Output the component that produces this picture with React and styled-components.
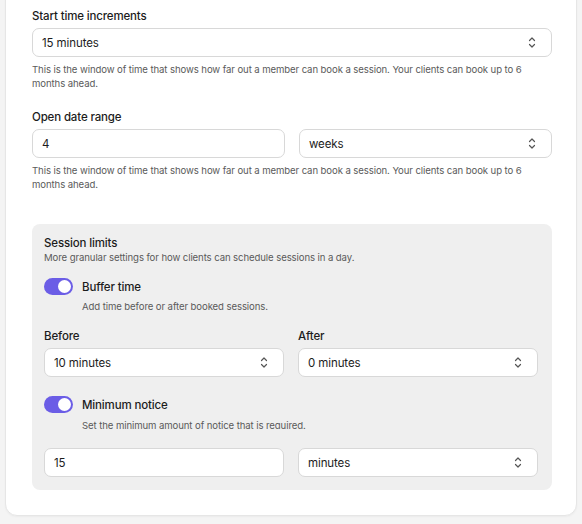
import React from "react";
import styled, { createGlobalStyle } from "styled-components";

const GlobalStyle = createGlobalStyle`
  *, *:before, *:after { box-sizing: border-box; }
  body {
    margin: 0;
    background: #f4f4f4;
    font-family: Inter, "Noto Sans", sans-serif;
    color: #1c1c1c;
    overflow: hidden;
  }
`;

const Page = styled.div`
  padding: 0 5px 9px 5px;
`;

const Card = styled.div`
  margin-top: -20px;
  background: #fff;
  border: 1px solid #e6e6e6;
  border-radius: 12px;
  box-shadow: 0 1px 2px rgba(0, 0, 0, 0.04);
  padding: 27px 24px 25px 26px;
  display: flex;
  flex-direction: column;
`;

const Section = styled.div`
  display: flex;
  flex-direction: column;
  margin-bottom: ${(p) => p.$gap || 0}px;
`;

const Label = styled.div`
  font-size: 11.5px;
  line-height: 16px;
  font-weight: 450;
  letter-spacing: -0.15px;
  color: #1c1c1c;
  margin-bottom: ${(p) => (p.$flush ? 0 : 4)}px;
`;

const Help = styled.div`
  font-size: 9.6px;
  line-height: 14px;
  letter-spacing: -0.1px;
  color: #5a5a5a;
  margin-top: ${(p) => p.$top || 0}px;
  ${(p) => p.$clip && "height: 10px; overflow: hidden;"}
`;

const Row = styled.div`
  display: grid;
  grid-template-columns: 1fr 1fr;
  column-gap: 14px;
  margin-top: ${(p) => p.$top || 0}px;
`;

const Field = styled.div`
  height: 29px;
  background: #fff;
  border: 1px solid #d8d8d8;
  border-radius: 7px;
  display: flex;
  align-items: center;
  justify-content: space-between;
  padding: 0 15px 0 9px;
  font-size: 11.5px;
  letter-spacing: -0.1px;
  color: #1c1c1c;
`;

const Panel = styled.div`
  background: #efefef;
  border-radius: 8px;
  padding: 11px 14px 13px 12px;
  display: flex;
  flex-direction: column;
`;

const ToggleRow = styled.div`
  display: flex;
  align-items: center;
  gap: 9px;
  margin-top: ${(p) => p.$top || 0}px;
`;

const Switch = styled.div`
  width: 29px;
  height: 17px;
  border-radius: 9px;
  background: #6b5de6;
  display: flex;
  align-items: center;
  justify-content: flex-end;
  padding: 0 2px;
`;

const Knob = styled.div`
  width: 13px;
  height: 13px;
  border-radius: 50%;
  background: #fff;
`;

const ToggleTitle = styled.div`
  font-size: 11.5px;
  line-height: 16px;
  font-weight: 450;
  letter-spacing: -0.15px;
`;

const Indent = styled.div`
  padding-left: 38px;
`;

const Chevrons = () => (
  <svg width="8" height="11" viewBox="0 0 8 11" fill="none" stroke="#555" strokeWidth="1.2" strokeLinecap="round" strokeLinejoin="round">
    <path d="M1.5 3.5 4 1l2.5 2.5" />
    <path d="M1.5 7.5 4 10l2.5-2.5" />
  </svg>
);

const Select = ({ value }) => (
  <Field>
    <span>{value}</span>
    <Chevrons />
  </Field>
);

const Toggle = ({ title, top }) => (
  <ToggleRow $top={top}>
    <Switch>
      <Knob />
    </Switch>
    <ToggleTitle>{title}</ToggleTitle>
  </ToggleRow>
);

const helpText =
  "This is the window of time that shows how far out a member can book a session. Your clients can book up to 6 months ahead.";

export default function App() {
  return (
    <Page>
      <GlobalStyle />
      <Card>
        <Section $gap={18}>
          <Label>Start time increments</Label>
          <Select value="15 minutes" />
          <Help $top={6}>{helpText}</Help>
        </Section>

        <Section $gap={32}>
          <Label>Open date range</Label>
          <Row>
            <Field>4</Field>
            <Select value="weeks" />
          </Row>
          <Help $top={6}>{helpText}</Help>
        </Section>

        <Panel>
          <Label $flush>Session limits</Label>
          <Help>More granular settings for how clients can schedule sessions in a day.</Help>

          <Toggle title="Buffer time" top={13} />
          <Indent>
            <Help $top={5}>Add time before or after booked sessions.</Help>
          </Indent>

          <Row $top={14}>
            <Section>
              <Label>Before</Label>
              <Select value="10 minutes" />
            </Section>
            <Section>
              <Label>After</Label>
              <Select value="0 minutes" />
            </Section>
          </Row>

          <Toggle title="Minimum notice" top={19} />
          <Indent>
            <Help $top={6} $clip>Set the minimum amount of notice that is required.</Help>
          </Indent>

          <Row $top={19}>
            <Field>15</Field>
            <Select value="minutes" />
          </Row>
        </Panel>
      </Card>
    </Page>
  );
}
